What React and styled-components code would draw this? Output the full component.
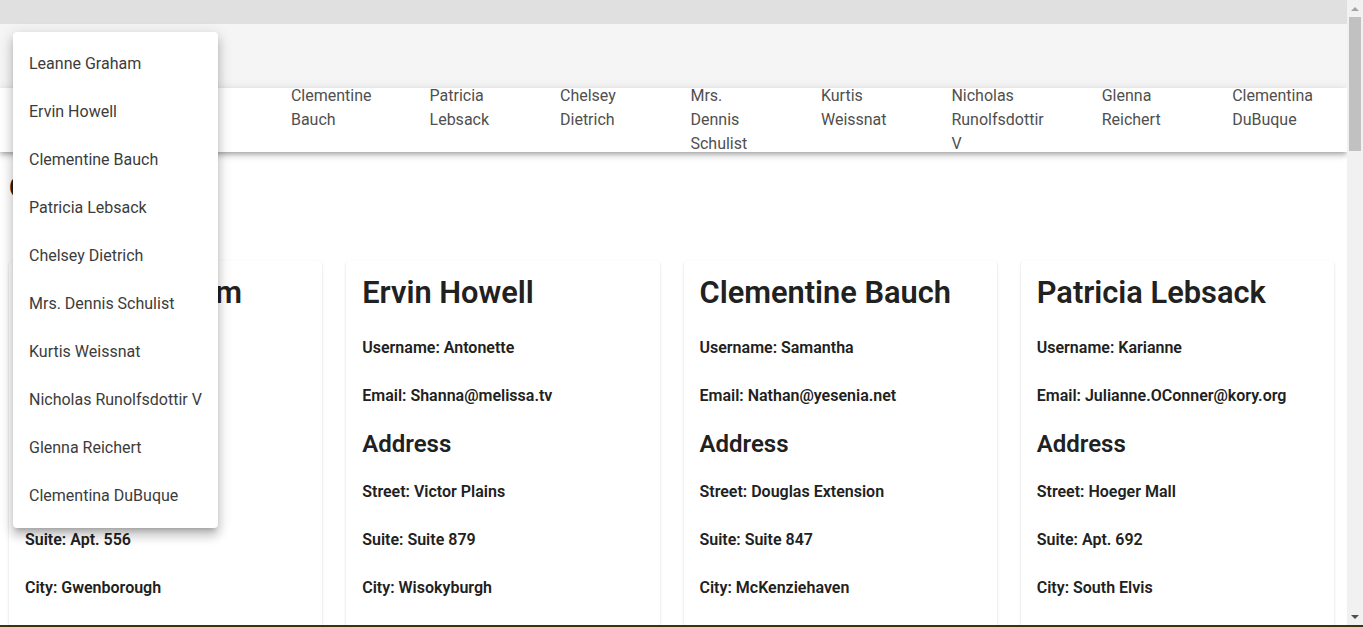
import React from 'react';
import styled, { createGlobalStyle } from 'styled-components';

const users = [
  { name: 'Leanne Graham', username: 'Bret', email: 'Sincere@april.biz', street: 'Kulas Light', suite: 'Apt. 556', city: 'Gwenborough', zipcode: '92998-3874' },
  { name: 'Ervin Howell', username: 'Antonette', email: 'Shanna@melissa.tv', street: 'Victor Plains', suite: 'Suite 879', city: 'Wisokyburgh', zipcode: '90566-7771' },
  { name: 'Clementine Bauch', username: 'Samantha', email: 'Nathan@yesenia.net', street: 'Douglas Extension', suite: 'Suite 847', city: 'McKenziehaven', zipcode: '59590-4157' },
  { name: 'Patricia Lebsack', username: 'Karianne', email: 'Julianne.OConner@kory.org', street: 'Hoeger Mall', suite: 'Apt. 692', city: 'South Elvis', zipcode: '53919-4257' },
  { name: 'Chelsey Dietrich', username: 'Kamren', email: 'Lucio_Hettinger@annie.ca', street: 'Skiles Walks', suite: 'Suite 351', city: 'Roscoeview', zipcode: '33263' },
  { name: 'Mrs. Dennis Schulist', username: 'Leopoldo_Corkery', email: 'Karley_Dach@jasper.info', street: 'Norberto Crossing', suite: 'Apt. 950', city: 'South Christy', zipcode: '23505-1337' },
  { name: 'Kurtis Weissnat', username: 'Elwyn.Skiles', email: 'Telly.Hoeger@billy.biz', street: 'Rex Trail', suite: 'Suite 280', city: 'Howemouth', zipcode: '58804-1099' },
  { name: 'Nicholas Runolfsdottir V', username: 'Maxime_Nienow', email: 'Sherwood@rosamond.me', street: 'Ellsworth Summit', suite: 'Suite 729', city: 'Aliyaview', zipcode: '45169' },
  { name: 'Glenna Reichert', username: 'Delphine', email: 'Chaim_McDermott@dana.io', street: 'Dayna Park', suite: 'Suite 449', city: 'Bartholomebury', zipcode: '76495-3109' },
  { name: 'Clementina DuBuque', username: 'Moriah.Stanton', email: 'Rey.Padberg@karina.biz', street: 'Kattie Turnpike', suite: 'Suite 198', city: 'Lebsackbury', zipcode: '31428-2261' },
];

const GlobalStyle = createGlobalStyle`
  html, body {
    margin: 0;
    padding: 0;
    overflow: hidden;
    background: #fff;
  }
  body {
    font-family: Roboto, "Liberation Sans", Arial, sans-serif;
  }
  * {
    box-sizing: border-box;
  }
`;

const App = () => {
  return (
    <Screen>
      <GlobalStyle />
      <Viewport>
        <Page>
          <TopStrip />
          <AppBar />
          <TabRow>
            {users.map((u) => (
              <Tab key={u.name}>{u.name}</Tab>
            ))}
          </TabRow>
          <Content>
            <Heading>Contacts</Heading>
            <CardGrid>
              {users.map((u) => (
                <Card key={u.name}>
                  <CardTitle>{u.name}</CardTitle>
                  <Field>Username: {u.username}</Field>
                  <Field>Email: {u.email}</Field>
                  <SubTitle>Address</SubTitle>
                  <Field>Street: {u.street}</Field>
                  <Field>Suite: {u.suite}</Field>
                  <Field>City: {u.city}</Field>
                  <Field>Zipcode: {u.zipcode}</Field>
                </Card>
              ))}
            </CardGrid>
          </Content>
          <Menu>
            {users.map((u) => (
              <MenuItem key={u.name}>{u.name}</MenuItem>
            ))}
          </Menu>
        </Page>
        <Scrollbar>
          <ScrollArrow $up />
          <ScrollTrack>
            <ScrollThumb />
          </ScrollTrack>
          <ScrollArrow />
        </Scrollbar>
      </Viewport>
      <BottomLine />
    </Screen>
  );
};

const Screen = styled.div`
  width: 1363px;
  height: 627px;
  display: flex;
  flex-direction: column;
  overflow: hidden;
`;

const Viewport = styled.div`
  flex: 1;
  display: flex;
  min-height: 0;
`;

const Page = styled.div`
  position: relative;
  flex: 1;
  overflow: hidden;
  background: #fff;
`;

const TopStrip = styled.div`
  height: 24px;
  background: #e0e0e0;
`;

const AppBar = styled.div`
  height: 64px;
  background: #f5f5f5;
`;

const TabRow = styled.div`
  position: relative;
  z-index: 1;
  height: 64px;
  display: flex;
  align-items: flex-start;
  padding: 0 0 0 6px;
  background: #fff;
  box-shadow: 0px 2px 4px -1px rgba(0, 0, 0, 0.2), 0px 4px 5px 0px rgba(0, 0, 0, 0.14),
    0px 1px 10px 0px rgba(0, 0, 0, 0.12);
`;

const Tab = styled.div`
  flex: 1 1 0;
  margin-top: -4px;
  padding: 0 34px 0 24px;
  font-size: 16px;
  line-height: 24px;
  color: #4f4f4f;
`;

const Content = styled.div`
  padding: 19px 13px 0 9px;
`;

const Heading = styled.h1`
  margin: 0 0 56px;
  font-size: 28px;
  line-height: 1.2;
  font-weight: 600;
  color: #212121;
`;

const CardGrid = styled.div`
  display: grid;
  grid-template-columns: repeat(4, 1fr);
  gap: 24px;
`;

const Card = styled.div`
  background: #fff;
  border-radius: 4px;
  padding: 13px 16px 16px;
  color: #212121;
  box-shadow: 0px 2px 1px -1px rgba(0, 0, 0, 0.2), 0px 1px 1px 0px rgba(0, 0, 0, 0.14),
    0px 1px 3px 0px rgba(0, 0, 0, 0.12);
`;

const CardTitle = styled.h2`
  margin: 0 0 24px;
  font-size: 30.8px;
  line-height: 38px;
  font-weight: 600;
`;

const SubTitle = styled.h3`
  margin: 24px 0;
  font-size: 24px;
  line-height: 24px;
  font-weight: 600;
`;

const Field = styled.p`
  margin: 24px 0;
  font-size: 16px;
  line-height: 24px;
  font-weight: 600;

  &:first-of-type {
    margin-top: 0;
  }
`;

const Menu = styled.ul`
  position: absolute;
  top: 32px;
  left: 13px;
  z-index: 10;
  width: 205px;
  margin: 0;
  padding: 8px 0;
  list-style: none;
  background: #fff;
  border-radius: 4px;
  box-shadow: 0px 5px 5px -3px rgba(0, 0, 0, 0.2), 0px 8px 10px 1px rgba(0, 0, 0, 0.14),
    0px 3px 14px 2px rgba(0, 0, 0, 0.12);
`;

const MenuItem = styled.li`
  height: 48px;
  display: flex;
  align-items: center;
  padding: 0 16px 2px;
  font-size: 16px;
  color: #3c3c3c;
  white-space: nowrap;
`;

const Scrollbar = styled.div`
  width: 16px;
  display: flex;
  flex-direction: column;
  background: #f1f1f1;
`;

const ScrollArrow = styled.div`
  height: 17px;
  display: flex;
  align-items: center;
  justify-content: center;

  &::before {
    content: '';
    border-left: 4px solid transparent;
    border-right: 4px solid transparent;
    ${(p) =>
      p.$up
        ? 'border-bottom: 4px solid #a3a3a3;'
        : 'border-top: 4px solid #505050;'}
  }
`;

const ScrollTrack = styled.div`
  flex: 1;
  padding: 0 2px;
`;

const ScrollThumb = styled.div`
  height: 134px;
  background: #c1c1c1;
`;

const BottomLine = styled.div`
  height: 2px;
  background: #3b3210;
`;

export default App;
